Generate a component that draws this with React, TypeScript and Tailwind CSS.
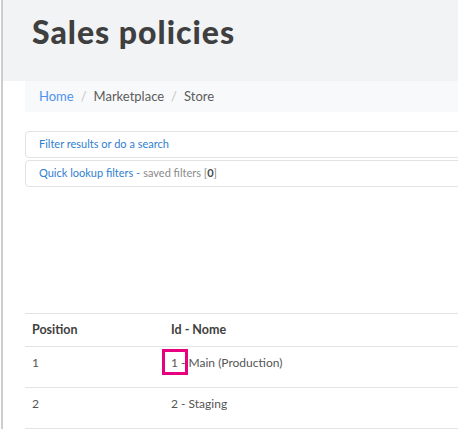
export default function App() {
  const rows = [
    { pos: "1", name: "1 - Main (Production)" },
    { pos: "2", name: "2 - Staging" },
  ];

  return (
    <div className="w-[458px] h-[429px] overflow-hidden bg-white pl-px">
      <div
        className="relative h-full w-[700px] border-l-2 border-[#cdcdcd]"
        style={{ fontFamily: "Lato, 'Liberation Sans', sans-serif" }}
      >
        {/* header */}
        <div className="h-[81px] bg-[#f2f3f5] pl-[29px] pt-[12px]">
          <h1 className="text-[32px] leading-[40px] font-black text-[#3f3f40] tracking-[1px]">
            Sales policies
          </h1>
        </div>

        {/* breadcrumb */}
        <div className="ml-[22px] h-[31px] bg-[#f8f9fa] pl-[14px] flex items-center text-[13px] text-[#5c5c5c]">
          <a className="text-[#4d93f0]">Home</a>
          <span className="mx-[7px] text-[#c4c4c4]">/</span>
          <span>Marketplace</span>
          <span className="mx-[7px] text-[#c4c4c4]">/</span>
          <span>Store</span>
        </div>

        {/* filters */}
        <div className="ml-[22px] mt-[19px] flex flex-col gap-[2px] text-[11px]">
          <div className="h-[27px] rounded-[4px] border border-[#e3e3e3] pl-[13px] flex items-center text-[#2f80d1]">
            Filter results or do a search
          </div>
          <div className="h-[27px] rounded-[4px] border border-[#e3e3e3] pl-[13px] flex items-center text-[#8a8a8a]">
            <span className="text-[#2f80d1]">Quick lookup filters -</span>
            <span className="ml-[3px]">
              saved filters [<b className="text-[#4a4a4a]">0</b>]
            </span>
          </div>
        </div>

        {/* table */}
        <table className="ml-[22px] mt-[126px] w-[678px] border-collapse text-left">
          <thead>
            <tr className="border-y border-[#e3e3e3]">
              <th className="w-[146px] h-[33px] pl-[7px] text-[12.5px] font-bold text-[#3f3f40]">
                Position
              </th>
              <th className="text-[12.5px] font-bold text-[#3f3f40]">Id - Nome</th>
            </tr>
          </thead>
          <tbody>
            {rows.map((r) => (
              <tr key={r.pos} className="border-b border-[#e3e3e3]">
                <td className="h-[41px] pl-[7px] pt-[7px] align-top text-[12px] text-[#555]">
                  {r.pos}
                </td>
                <td className="pt-[7px] align-top text-[12px] text-[#555]">{r.name}</td>
              </tr>
            ))}
          </tbody>
        </table>

        {/* annotation highlight */}
        <div className="absolute left-[159px] top-[349px] w-[26px] h-[26px] border-[3px] border-[#e8007f]" />
      </div>
    </div>
  );
}
